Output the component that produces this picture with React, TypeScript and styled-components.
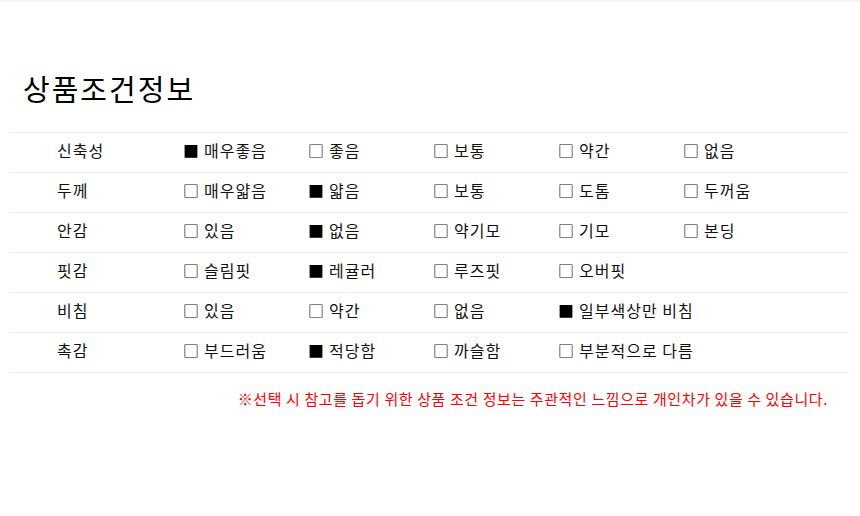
import styled, { createGlobalStyle } from 'styled-components';

type Option = { label: string; checked?: boolean };
type Row = { name: string; options: Option[] };

const rows: Row[] = [
  {
    name: '신축성',
    options: [
      { label: '매우좋음', checked: true },
      { label: '좋음' },
      { label: '보통' },
      { label: '약간' },
      { label: '없음' },
    ],
  },
  {
    name: '두께',
    options: [
      { label: '매우얇음' },
      { label: '얇음', checked: true },
      { label: '보통' },
      { label: '도톰' },
      { label: '두꺼움' },
    ],
  },
  {
    name: '안감',
    options: [
      { label: '있음' },
      { label: '없음', checked: true },
      { label: '약기모' },
      { label: '기모' },
      { label: '본딩' },
    ],
  },
  {
    name: '핏감',
    options: [
      { label: '슬림핏' },
      { label: '레귤러', checked: true },
      { label: '루즈핏' },
      { label: '오버핏' },
    ],
  },
  {
    name: '비침',
    options: [
      { label: '있음' },
      { label: '약간' },
      { label: '없음' },
      { label: '일부색상만 비침', checked: true },
    ],
  },
  {
    name: '촉감',
    options: [
      { label: '부드러움' },
      { label: '적당함', checked: true },
      { label: '까슬함' },
      { label: '부분적으로 다름' },
    ],
  },
];

export default function App() {
  return (
    <>
      <GlobalStyle />
      <TopBar />
      <Section>
        <Title>상품조건정보</Title>
        <Table>
          {rows.map((row) => (
            <TableRow key={row.name}>
              <Label>{row.name}</Label>
              {row.options.map((opt) => (
                <Cell key={opt.label}>
                  <Mark>{opt.checked ? '■' : '□'}</Mark>
                  {opt.label}
                </Cell>
              ))}
            </TableRow>
          ))}
        </Table>
        <Notice>※선택 시 참고를 돕기 위한 상품 조건 정보는 주관적인 느낌으로 개인차가 있을 수 있습니다.</Notice>
      </Section>
    </>
  );
}

const GlobalStyle = createGlobalStyle`
  body {
    margin: 0;
    background: #fff;
    color: #111;
    font-family: 'Noto Sans CJK KR', 'Noto Sans', sans-serif;
  }
`;

const TopBar = styled.div`
  height: 2px;
  background: #f4f4f4;
`;

const Section = styled.section`
  padding: 0 10px;
`;

const Title = styled.h2`
  margin: 0;
  padding: 66px 0 0 13px;
  height: 64px;
  font-size: 29px;
  font-weight: 400;
  letter-spacing: 2px;
  line-height: 40px;
  color: #000;
`;

const Table = styled.div`
  border-top: 1px solid #eeeeee;
`;

const TableRow = styled.div`
  display: grid;
  grid-template-columns: 174px repeat(5, 125px);
  align-items: center;
  box-sizing: border-box;
  height: 40px;
  padding-bottom: 5px;
  border-bottom: 1px solid #eeeeee;
  font-size: 16px;
  letter-spacing: 1px;
`;

const Label = styled.div`
  padding-left: 47px;
`;

const Cell = styled.div`
  display: flex;
  align-items: center;
  white-space: nowrap;
`;

const Mark = styled.span`
  flex-shrink: 0;
  width: 21px;
  margin-left: -1px;
  font-size: 16px;
  letter-spacing: 0;
  color: #000;
  will-change: transform;
`;

const Notice = styled.p`
  margin: 15px 22px 0 0;
  text-align: right;
  font-size: 15px;
  letter-spacing: 0.6px;
  color: #ff0000;
`;
